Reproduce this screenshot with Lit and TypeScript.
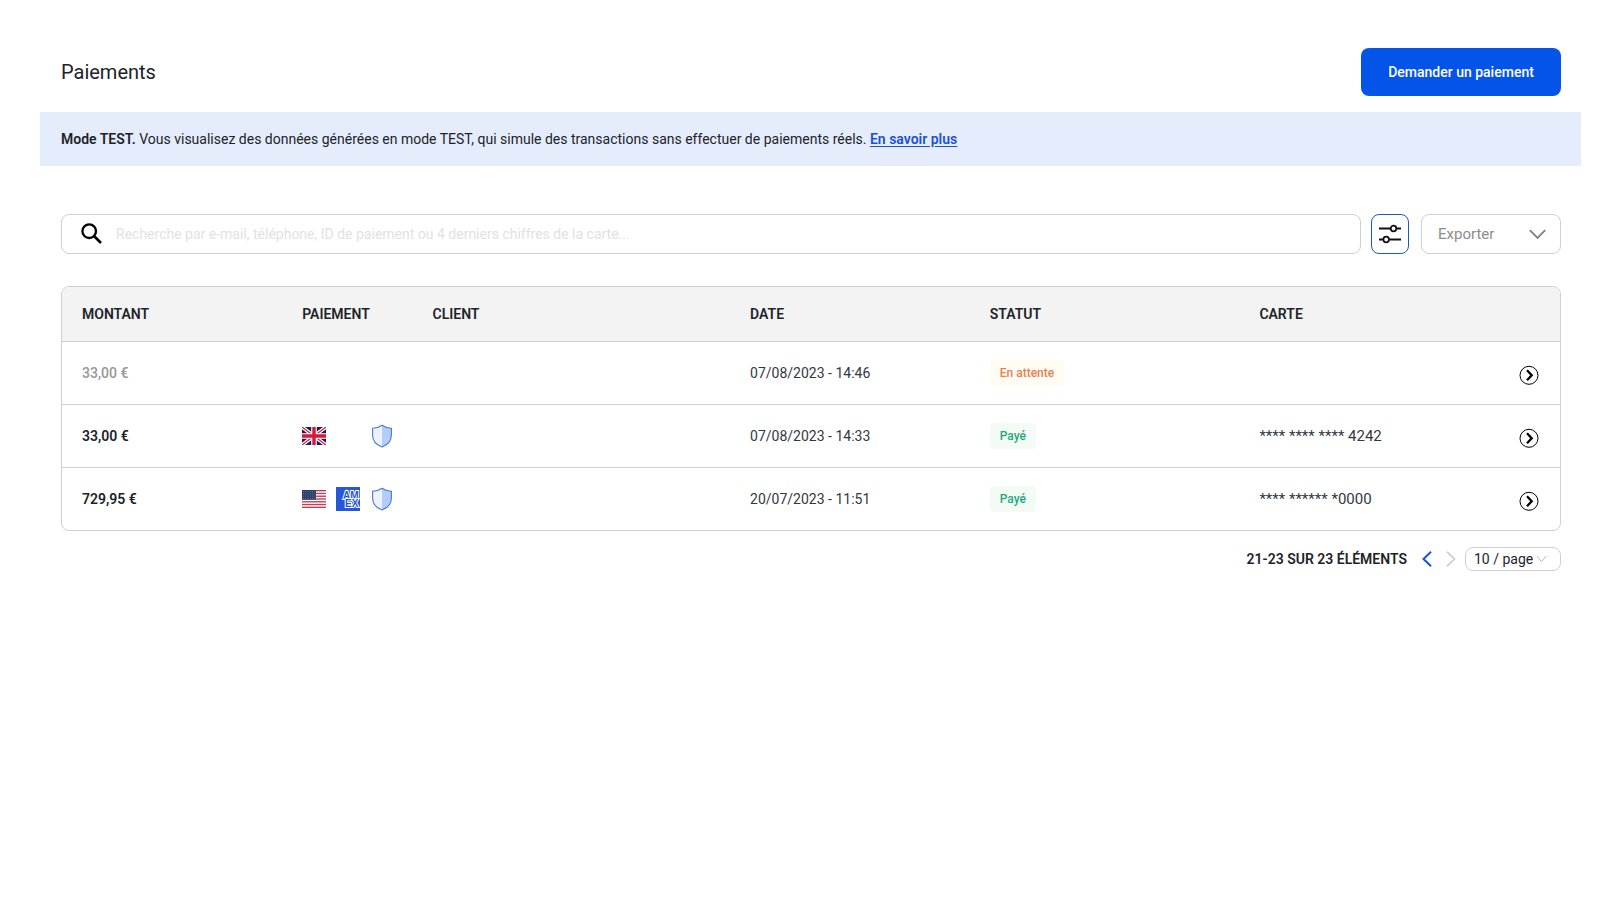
import { LitElement, html, css, svg, nothing } from "lit";
import { customElement } from "lit/decorators.js";
import { classMap } from "lit/directives/class-map.js";

interface Payment {
  amount: string;
  muted?: boolean;
  country?: "gb" | "us";
  scheme?: "amex";
  secured?: boolean;
  date: string;
  status: "pending" | "paid";
  card: string;
}

const payments: Payment[] = [
  { amount: "33,00 €", muted: true, date: "07/08/2023 - 14:46", status: "pending", card: "" },
  { amount: "33,00 €", country: "gb", secured: true, date: "07/08/2023 - 14:33", status: "paid", card: "**** **** **** 4242" },
  { amount: "729,95 €", country: "us", scheme: "amex", secured: true, date: "20/07/2023 - 11:51", status: "paid", card: "**** ****** *0000" },
];

const statusLabels = { pending: "En attente", paid: "Payé" };

const flagGb = html`<svg width="24" height="18" viewBox="0 0 24 18" role="img" aria-label="Royaume-Uni">
  <rect width="24" height="18" fill="#14204f"></rect>
  <path d="M0 0 24 18M24 0 0 18" stroke="#fff" stroke-width="3.6"></path>
  <path d="M0 0 24 18M24 0 0 18" stroke="#d5183a" stroke-width="1.2"></path>
  <path d="M12 0V18M0 9H24" stroke="#fff" stroke-width="5.6"></path>
  <path d="M12 0V18M0 9H24" stroke="#d5183a" stroke-width="3.4"></path>
</svg>`;

const flagUs = html`<svg width="24" height="18" viewBox="0 0 24 18" role="img" aria-label="États-Unis">
  <rect width="24" height="18" fill="#fff"></rect>
  ${[0, 1, 2, 3, 4, 5, 6].map((i) => svg`<rect y=${i * 2.77} width="24" height="1.38" fill="#c0405a"></rect>`)}
  <rect width="14" height="9.7" fill="#2b3f68"></rect>
  ${[1.5, 3.8, 6.1, 8.4].map((y) => svg`<path d="M1 ${y}H13.5" stroke="#8492ae" stroke-width=".8" stroke-dasharray=".8 1.5"></path>`)}
</svg>`;

const amex = html`<svg width="24" height="24" viewBox="0 0 24 24" role="img" aria-label="American Express">
  <rect width="24" height="24" fill="#2557d6"></rect>
  <g class="amex" fill="#2557d6" stroke="#fff" stroke-width="2">
    <text x="7" y="12">AM</text>
    <text x="9" y="20">EX</text>
  </g>
</svg>`;

const shield = html`<svg width="22" height="24" viewBox="0 0 22 24" role="img" aria-label="3-D Secure">
  <path d="M11 1.2C8.2 3.2 4.9 4.1 1.6 4.3V11c0 5.6 3.9 9.9 9.4 12 5.5-2.1 9.4-6.4 9.4-12V4.3C17.1 4.1 13.8 3.2 11 1.2Z" fill="#edf3fe"></path>
  <path d="M11 1.2V23c5.5-2.1 9.4-6.4 9.4-12V4.3C17.1 4.1 13.8 3.2 11 1.2Z" fill="#b4cdfa"></path>
  <path d="M11 1.2C8.2 3.2 4.9 4.1 1.6 4.3V11c0 5.6 3.9 9.9 9.4 12 5.5-2.1 9.4-6.4 9.4-12V4.3C17.1 4.1 13.8 3.2 11 1.2Z" fill="none" stroke="#4a78d4" stroke-width="1.1"></path>
</svg>`;

@customElement("app-root")
export class AppRoot extends LitElement {
  static styles = css`
    :host {
      display: block;
      padding: 48px 19px 48px 40px;
      font-family: Roboto, sans-serif;
      font-size: 14px;
      line-height: 22px;
      color: #1d2329;
    }
    * { box-sizing: border-box; }
    svg { display: block; flex: none; }
    button, input, select { font: inherit; color: inherit; margin: 0; }
    button { cursor: pointer; }
    strong { font-weight: 600; }
    .header {
      display: flex;
      align-items: center;
      justify-content: space-between;
      padding: 0 20px 0 21px;
    }
    h1 { margin: 0; font-size: 20px; line-height: 28px; font-weight: 400; }
    .primary {
      height: 48px;
      min-width: 200px;
      padding: 0 24px;
      border: 0;
      border-radius: 8px;
      background: #0554ea;
      color: #fff;
      font-weight: 500;
    }
    .banner {
      margin: 16px 0 0;
      padding: 16px 20px 16px 21px;
      background: #e5edfd;
    }
    .banner a { color: #1652d6; font-weight: 600; text-underline-offset: 2px; }
    .content { padding: 48px 20px 0 21px; }
    .toolbar { display: flex; height: 40px; }
    .search {
      flex: 1;
      display: flex;
      align-items: center;
      gap: 12px;
      padding: 0 18px;
      border: 1px solid #d0d0d0;
      border-radius: 8px;
    }
    .search input { flex: 1; min-width: 0; padding: 0; border: 0; outline: 0; background: none; }
    .search input::placeholder { color: #e2e2e2; opacity: 1; }
    .filter {
      display: grid;
      place-items: center;
      width: 38px;
      margin: 0 12px 0 10px;
      padding: 0;
      border: 1px solid #1d55c9;
      border-radius: 8px;
      background: #fff;
    }
    .select { display: grid; align-items: center; }
    .select select {
      grid-area: 1 / 1;
      appearance: none;
      width: 100%;
      height: 100%;
      border: 1px solid #d0d0d0;
      border-radius: 8px;
      background: #fff;
    }
    .select svg { grid-area: 1 / 1; justify-self: end; pointer-events: none; }
    .export { width: 140px; font-size: 15px; color: #8c8c8c; }
    .export select { padding: 0 16px; }
    .export svg { margin-right: 15px; }
    .frame {
      margin-top: 32px;
      border: 1px solid #d0d0d0;
      border-radius: 8px;
      overflow: hidden;
    }
    table { width: 100%; border-collapse: separate; border-spacing: 0; table-layout: fixed; }
    .c-amount { width: 14.7%; }
    .c-payment { width: 8.7%; }
    .c-client { width: 21.2%; }
    .c-date { width: 16%; }
    .c-status { width: 18%; }
    th, td { padding: 0 20px; text-align: left; white-space: nowrap; }
    th { height: 54px; background: #f3f3f3; font-weight: 600; }
    th.payment, td.payment { padding-right: 0; }
    td { height: 63px; border-top: 1px solid #d0d0d0; color: #32383e; }
    .amount { font-weight: 600; color: #1d2329; }
    .amount.muted { color: #979797; font-weight: 500; }
    .card { font-size: 15px; }
    .icons { display: grid; grid-template-columns: 24px 24px 22px; column-gap: 10px; align-items: center; }
    .icons span:last-child { padding-left: 1px; }
    .amex { font: 700 10px "Liberation Sans", sans-serif; paint-order: stroke; }
    .tag {
      display: block;
      width: fit-content;
      padding: 2px 10px;
      border-radius: 4px;
      font-size: 12px;
      font-weight: 500;
    }
    .pending { background: #fffcf3; color: #e8804f; }
    .paid { background: #f3fbf4; color: #22a97d; }
    td.action { padding-top: 4px; }
    .open { display: block; margin-left: auto; padding: 0; border: 0; background: none; }
    .pager { display: flex; align-items: center; justify-content: flex-end; margin-top: 16px; }
    .count { margin-right: 8px; font-weight: 600; }
    .step { padding: 0 4px; border: 0; background: none; color: #1652e0; }
    .step:disabled { color: #c9c9c9; }
    .size { width: 96px; height: 24px; margin-left: 2px; }
    .size select { padding: 0 8px; }
    .size svg { margin-right: 14px; }
  `;

  private row(p: Payment) {
    return html`<tr>
      <td class=${classMap({ amount: true, muted: !!p.muted })}>${p.amount}</td>
      <td class="payment">
        <div class="icons">
          <span>${p.country === "gb" ? flagGb : p.country === "us" ? flagUs : nothing}</span>
          <span>${p.scheme ? amex : nothing}</span>
          <span>${p.secured ? shield : nothing}</span>
        </div>
      </td>
      <td></td>
      <td>${p.date}</td>
      <td><span class="tag ${p.status}">${statusLabels[p.status]}</span></td>
      <td class="card">${p.card}</td>
      <td class="action">
        <button class="open" aria-label="Voir le paiement">
          <svg width="22" height="22" viewBox="0 0 22 22" fill="none" stroke="#000">
            <circle cx="11" cy="11.3" r="9"></circle>
            <path d="m9 6.3 4.7 5-4.7 5" stroke-width="2.3"></path>
          </svg>
        </button>
      </td>
    </tr>`;
  }

  render() {
    return html`
      <header class="header">
        <h1>Paiements</h1>
        <button class="primary">Demander un paiement</button>
      </header>
      <p class="banner">
        <strong>Mode TEST.</strong> Vous visualisez des données générées en mode TEST, qui simule des transactions sans
        effectuer de paiements réels. <a href="#">En savoir plus</a>
      </p>
      <main class="content">
        <div class="toolbar">
          <label class="search">
            <svg width="24" height="24" viewBox="0 0 24 24" fill="none" stroke="#000">
              <circle cx="9.2" cy="9.2" r="6.8" stroke-width="2.3"></circle>
              <path d="m14 14 7 7" stroke-width="2.7"></path>
            </svg>
            <input
              type="text"
              aria-label="Recherche"
              placeholder="Recherche par e-mail, téléphone, ID de paiement ou 4 derniers chiffres de la carte..."
            />
          </label>
          <button class="filter" aria-label="Filtres">
            <svg width="22" height="20" viewBox="0 0 22 20" fill="none" stroke="#111" stroke-width="1.8">
              <path d="M0 4.500H11.500M17.500 4.500H22M0 15.500H4.500M10.500 15.500H22"></path>
              <circle cx="14.5" cy="4.5" r="2.8"></circle>
              <circle cx="7.2" cy="15.5" r="2.8"></circle>
            </svg>
          </button>
          <div class="select export">
            <select aria-label="Exporter"><option>Exporter</option></select>
            <svg width="17" height="12" viewBox="0 0 17 12" fill="none" stroke="#808080" stroke-width="1.8">
              <path d="m.8 2.2 7.7 7.7 7.7-7.7"></path>
            </svg>
          </div>
        </div>

        <div class="frame">
          <table>
            <colgroup>
              <col class="c-amount" /><col class="c-payment" /><col class="c-client" /><col class="c-date" />
              <col class="c-status" /><col /><col class="c-action" />
            </colgroup>
            <thead>
              <tr>
                <th>MONTANT</th>
                <th class="payment">PAIEMENT</th>
                <th>CLIENT</th>
                <th>DATE</th>
                <th>STATUT</th>
                <th>CARTE</th>
                <th></th>
              </tr>
            </thead>
            <tbody>
              ${payments.map((p) => this.row(p))}
            </tbody>
          </table>
        </div>

        <nav class="pager" aria-label="Pagination">
          <span class="count">21-23 SUR 23 ÉLÉMENTS</span>
          <button class="step" aria-label="Page précédente">
            <svg width="16" height="16" viewBox="0 0 16 16" fill="none" stroke="currentColor" stroke-width="2">
              <path d="M12 .8 4.500 8l7.500 7.200"></path>
            </svg>
          </button>
          <button class="step" aria-label="Page suivante" disabled>
            <svg width="16" height="16" viewBox="0 0 16 16" fill="none" stroke="currentColor" stroke-width="1.6">
              <path d="m4 .8 7.500 7.200L4 15.200"></path>
            </svg>
          </button>
          <div class="select size">
            <select aria-label="Éléments par page"><option>10 / page</option></select>
            <svg width="11" height="8" viewBox="0 0 11 8" fill="none" stroke="#bbb">
              <path d="m.8.8 4.700 6 4.700-6"></path>
            </svg>
          </div>
        </nav>
      </main>
    `;
  }
}
